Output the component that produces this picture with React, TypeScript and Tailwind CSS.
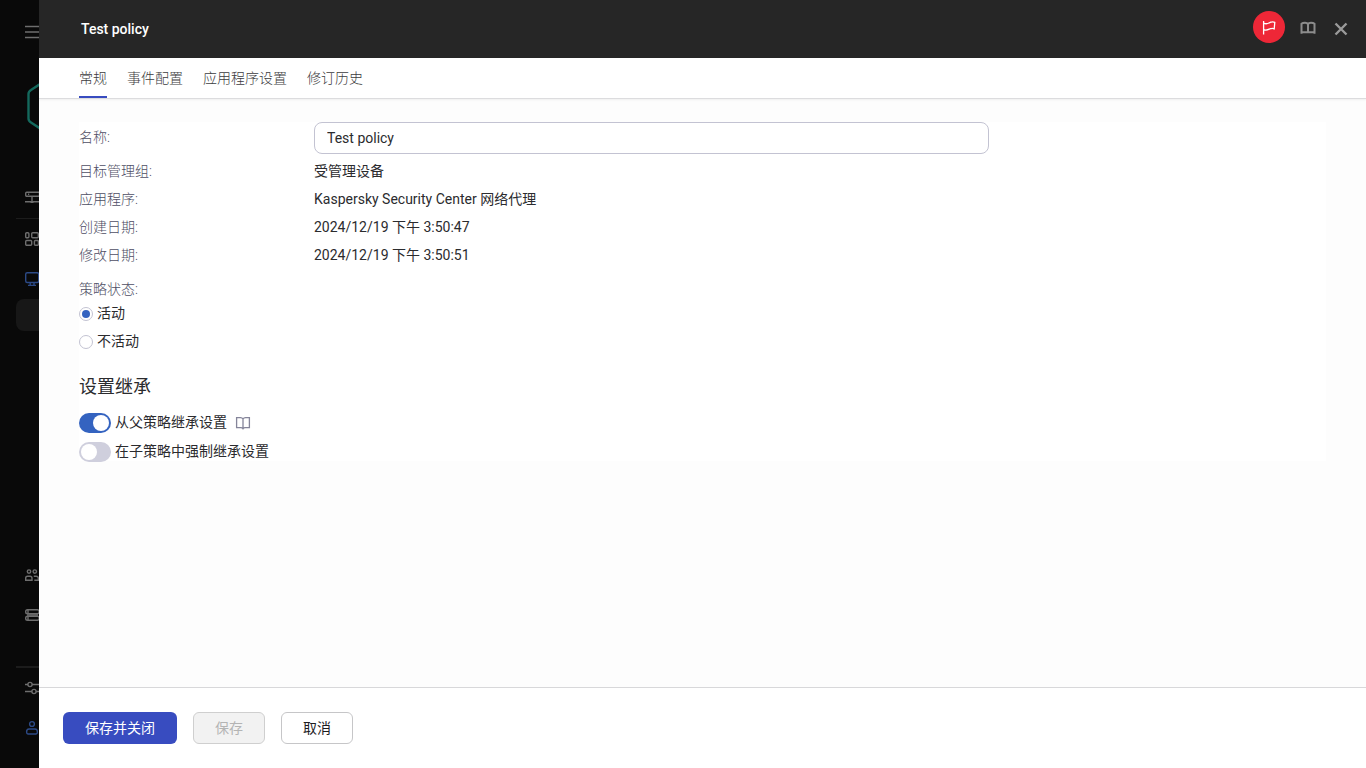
import { useState } from "react";
import type { ReactNode } from "react";

const TABS = ["常规", "事件配置", "应用程序设置", "修订历史"];

const DETAILS = [
  { label: "目标管理组:", value: "受管理设备" },
  { label: "应用程序:", value: "Kaspersky Security Center 网络代理" },
  { label: "创建日期:", value: "2024/12/19 下午 3:50:47" },
  { label: "修改日期:", value: "2024/12/19 下午 3:50:51" },
];

const STATES = [
  { id: "active", label: "活动" },
  { id: "inactive", label: "不活动" },
];

export default function App() {
  const [tab, setTab] = useState(TABS[0]);
  const [name, setName] = useState("Test policy");
  const [state, setState] = useState("active");
  const [inherit, setInherit] = useState(true);
  const [force, setForce] = useState(false);

  return (
    <div className="flex min-h-screen bg-[#090909] font-['Roboto','Noto_Sans_CJK_SC',sans-serif] text-sm text-[#2b2b2e]">
      <Sidebar />

      <div role="dialog" aria-label="Test policy" className="flex min-w-0 flex-1 flex-col bg-white">
        <header className="flex h-[58px] shrink-0 items-center bg-[#262626] pr-[17px] pl-[42px]">
          <h1 className="flex-1 text-sm font-medium text-white">Test policy</h1>
          <div className="flex items-center pb-1">
            <button type="button" aria-label="通知" className="flex size-8 items-center justify-center rounded-full bg-[#ee2737] text-white">
              <FlagIcon />
            </button>
            <button type="button" aria-label="帮助" className="ml-[15px] flex size-4 items-center justify-center pt-0.5 text-[#8c8c8c]">
              <BookIcon bold />
            </button>
            <button type="button" aria-label="关闭" className="ml-[17px] flex size-4 items-center justify-center pt-1 text-[#9a9a9a]">
              <svg viewBox="0 0 16 16" className="size-4 shrink-0" fill="none" stroke="currentColor" strokeWidth="2.4">
                <path d="M2.5 2.5 13.5 13.5M13.5 2.5 2.5 13.5" />
              </svg>
            </button>
          </div>
        </header>

        <nav className="z-10 flex h-[41px] shrink-0 gap-5 border-b border-[#dcdcde] px-10 shadow-[0_1px_2px_rgba(0,0,0,0.06)]">
          {TABS.map((t) => (
            <button
              key={t}
              type="button"
              onClick={() => setTab(t)}
              className={`border-b-2 pt-0.5 font-light text-[#3c3c40] ${t === tab ? "border-[#384cc0]" : "border-transparent"}`}
            >
              {t}
            </button>
          ))}
        </nav>

        <main className="flex-1 bg-[#fdfdfd] px-10 pt-[23px]">
          <form className="bg-white">
            <div className="flex h-8 items-center">
              <label htmlFor="name" className="w-[235px] shrink-0 pb-0.5 font-light text-[#4e4e64]">
                名称:
              </label>
              <div className="flex-1">
                <input
                  id="name"
                  value={name}
                  onChange={(e) => setName(e.target.value)}
                  className="block h-8 w-2/3 rounded-lg border border-[#c3c3d2] bg-white px-3 outline-none"
                />
              </div>
            </div>

            <dl className="pt-[3px]">
              {DETAILS.map((d) => (
                <div key={d.label} className="flex h-7 items-center">
                  <dt className="w-[235px] shrink-0 font-light text-[#4e4e64]">{d.label}</dt>
                  <dd>{d.value}</dd>
                </div>
              ))}
            </dl>

            <fieldset className="mt-[10px]">
              <legend className="h-5 leading-5 font-light text-[#4e4e64]">策略状态:</legend>
              {STATES.map((s) => (
                <label key={s.id} className="flex h-7 items-center gap-1">
                  <input
                    type="radio"
                    name="state"
                    checked={state === s.id}
                    onChange={() => setState(s.id)}
                    className="mt-0.5 flex size-[14px] appearance-none items-center justify-center rounded-full border border-[#c3c3d2] bg-white before:size-2 before:rounded-full before:content-[''] checked:before:bg-[#3463c0]"
                  />
                  {s.label}
                </label>
              ))}
            </fieldset>

            <h2 className="pt-[18px] pb-2 text-lg leading-7">设置继承</h2>

            <div className="flex h-7 items-center">
              <Toggle label="从父策略继承设置" checked={inherit} onChange={setInherit} />
              <a href="#inherit" aria-label="帮助" className="ml-2 text-[#85859a]">
                <BookIcon />
              </a>
            </div>
            <div className="flex h-6 items-start pt-1">
              <Toggle label="在子策略中强制继承设置" checked={force} onChange={setForce} />
            </div>
          </form>
        </main>

        <footer className="flex shrink-0 gap-4 border-t border-[#d8d8da] px-6 py-6">
          <button type="button" className="h-8 rounded-md bg-[#384cc0] px-[22px] text-white">
            保存并关闭
          </button>
          <button type="button" disabled className="h-8 rounded-md border border-[#cfcfcf] bg-[#f2f2f2] px-[21px] text-[#b4b4b4]">
            保存
          </button>
          <button type="button" className="h-8 rounded-md border border-[#c6c6c8] bg-white px-[21px] text-[#1d1d1f]">
            取消
          </button>
        </footer>
      </div>
    </div>
  );
}

function Toggle({ label, checked, onChange }: { label: string; checked: boolean; onChange: (v: boolean) => void }) {
  return (
    <label className="flex items-center gap-1">
      <input
        type="checkbox"
        role="switch"
        checked={checked}
        onChange={(e) => onChange(e.target.checked)}
        className="flex h-5 w-8 appearance-none items-center rounded-full bg-[#cfcfdd] px-[2px] before:size-4 before:rounded-full before:bg-white before:content-[''] checked:justify-end checked:bg-[#3463c0]"
      />
      <span className="pb-0.5">{label}</span>
    </label>
  );
}

function BookIcon({ bold = false }: { bold?: boolean }) {
  return (
    <svg viewBox="0 0 16 16" className="size-4 shrink-0" fill="none" stroke="currentColor" strokeWidth={bold ? 2 : 1.3}>
      {bold ? (
        <path d="M8 4.5C7.6 3.3 6.500 2.800 5 2.800S2.200 3.200 1.500 3.800v10M14.500 13.800V3.800C13.800 3.200 12.500 2.800 11 2.800S8.400 3.300 8 4.500v8.500M1.500 12.300h13" />
      ) : (
        <path d="M8 4C7.500 3.100 6.700 2.700 5.500 2.700H1.600v10h4.200c1.100 0 1.800.2 2.200.9.400-.7 1.100-.9 2.200-.9h4.200v-10h-3.900C9.300 2.700 8.500 3.100 8 4ZM8 4v9.600" />
      )}
    </svg>
  );
}

function FlagIcon() {
  return (
    <svg viewBox="0 0 16 16" className="size-4 shrink-0" fill="none" stroke="currentColor" strokeWidth="1.3">
      <path d="M2.600 2v13.500M2.600 4c2 1.200 4 .8 5.800-.2 1.900-1 3.700-1.200 5.400-.4L13.200 9.800c-1.600-.7-3.300-.4-5 .4-1.800.9-3.700 1.200-5.600.4" />
    </svg>
  );
}

function NavItem({ label, active = false, children }: { label: string; active?: boolean; children: ReactNode }) {
  return (
    <a href="#nav" aria-label={label} className={`flex h-10 w-10 shrink-0 items-center pl-2 ${active ? "text-[#2c4a86]" : "text-[#6e6e6e]"}`}>
      <svg viewBox="0 0 16 16" className="size-4 shrink-0" fill="none" stroke="currentColor" strokeWidth="1.4">
        {children}
      </svg>
    </a>
  );
}

function Sidebar() {
  return (
    <aside className="flex w-[39px] shrink-0 flex-col overflow-hidden pt-3 pb-5 pl-4">
      <NavItem label="菜单">
        <path d="M1 2.500h16M1 8h16M1 13.500h16" strokeWidth="1.600" />
      </NavItem>

      <svg viewBox="0 0 42 52" className="mt-7 mb-[45px] ml-[11px] h-[52px] w-[42px] shrink-0 overflow-visible" fill="none" stroke="#14695d" strokeWidth="2.400">
        <path d="M1.500 14q0-2.500 2.500-4L18.500.5q2.500-1.500 5 0L38 10q2.500 1.500 2.500 4v24.500q0 2.500-2.500 4L23.500 52q-2.500 1.500-5 0L4 42.500q-2.500-1.500-2.500-4Z" />
      </svg>

      <NavItem label="服务器">
        <rect x="1.700" y="3.200" width="13.800" height="4" rx="1" />
        <path d="M8 7.500v5M1 12.700h15M6.500 13.400h3M4 5.200h1.200" />
      </NavItem>
      <div className="mt-px h-px shrink-0 bg-[#1c1c1c]" />
      <NavItem label="仪表板">
        <rect x="1.700" y="1.700" width="3.200" height="5" rx="1" />
        <rect x="7.700" y="1.700" width="6.600" height="5" rx="1" />
        <rect x="1.700" y="9.500" width="6" height="4.800" rx="1" />
        <rect x="10.400" y="9.500" width="4" height="4.800" rx="1" />
      </NavItem>
      <NavItem label="资产" active>
        <rect x="1.700" y="1.700" width="13" height="9.800" rx="1.500" />
        <path d="M6.200 11.500v2.500M10 11.500v2.500M4 14.400h8" />
      </NavItem>
      <div className="h-8 w-20 shrink-0 rounded-lg bg-[#171717]" />

      <div className="min-h-4 flex-1" />

      <NavItem label="用户">
        <circle cx="5" cy="4.600" r="1.700" />
        <circle cx="10.800" cy="4.600" r="1.700" />
        <path d="M1.700 13.200V11q0-1.800 1.800-1.800H6q2 0 2 2v2ZM9.800 9.200h2.200q2.300 0 2.300 2v2h-4" />
      </NavItem>
      <NavItem label="存储库">
        <rect x="1.700" y="2.700" width="13.500" height="4" rx="1.800" />
        <rect x="1.700" y="9.300" width="13.500" height="4" rx="1.800" />
        <path d="M4 3v4M4 9v4M3 8h11" />
      </NavItem>
      <div className="mt-[31px] h-[2px] shrink-0 bg-[#1c1c1c]" />
      <NavItem label="设置">
        <circle cx="6" cy="4.500" r="2.100" />
        <circle cx="10" cy="11.500" r="2.100" />
        <path d="M1 4.500h3M8 4.500h8M1 11.500h7M12 11.500h4" />
      </NavItem>
      <NavItem label="帐户" active>
        <circle cx="8" cy="4" r="2.400" />
        <path d="M2.600 12q0-3 2.400-3h6q2.400 0 2.400 3 0 2-1.400 2H4q-1.400 0-1.400-2Z" />
      </NavItem>
    </aside>
  );
}
